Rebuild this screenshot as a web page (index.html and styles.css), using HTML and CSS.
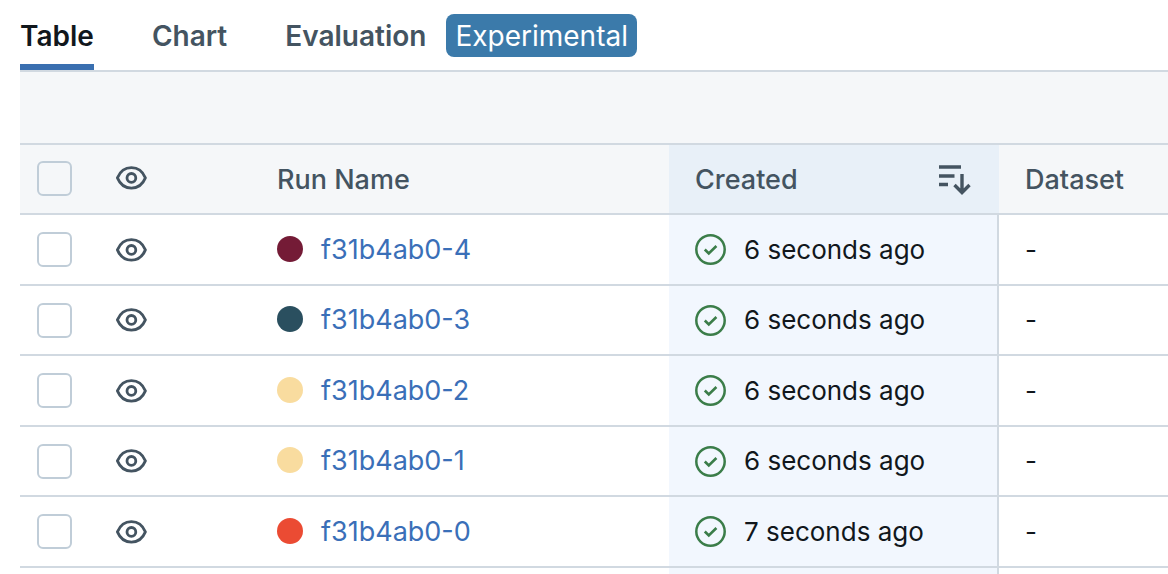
FILE: index.html
```html
<!DOCTYPE html>
<html lang="en">
<head>
<meta charset="utf-8">
<meta name="viewport" content="width=device-width, initial-scale=1">
<title>Runs</title>
<link rel="stylesheet" href="styles.css">
</head>
<body>
<svg class="sprite" aria-hidden="true">
  <symbol id="eye" viewBox="0 0 32 26">
    <path d="M2.400 12.900C4.900 6.900 9.900 2.700 16.400 2.700S27.900 6.900 30.400 12.900C27.900 18.900 22.900 23.100 16.400 23.100S4.900 18.900 2.400 12.900Z" fill="none" stroke="currentColor" stroke-width="2.800" stroke-linejoin="round"/>
    <circle cx="16.400" cy="12.900" r="4.400" fill="none" stroke="currentColor" stroke-width="2.800"/>
  </symbol>
  <symbol id="check" viewBox="0.5 0.5 31 31">
    <circle cx="16" cy="16" r="14.200" fill="none" stroke="currentColor" stroke-width="2.500"/>
    <path d="M10.300 16L14.300 20L21.900 12.500" fill="none" stroke="currentColor" stroke-width="2.600"/>
  </symbol>
  <symbol id="sort" viewBox="1 1 34 32">
    <path d="M1 4H23M1 13H16.500M1 21.500H10M24 11V29M16.500 22L24 29.500L31.500 22" fill="none" stroke="currentColor" stroke-width="3.400"/>
  </symbol>
</svg>
<main class="runs">
  <nav class="tabs" aria-label="Views">
    <button class="tab tab-active" type="button">Table</button>
    <button class="tab" type="button">Chart</button>
    <button class="tab" type="button">Evaluation <span class="tag">Experimental</span></button>
  </nav>
  <div class="group-header"></div>
  <table class="grid">
    <colgroup><col class="col-check"><col class="col-eye"><col class="col-name"><col class="col-created"><col></colgroup>
    <thead>
      <tr>
        <th><input class="box" type="checkbox" aria-label="Select all runs"></th>
        <th><button class="eye" type="button" aria-label="Toggle all runs"><svg><use href="#eye"/></svg></button></th>
        <th>Run Name</th>
        <th class="created"><div class="sorted">Created <svg class="sort"><use href="#sort"/></svg></div></th>
        <th>Dataset</th>
      </tr>
    </thead>
    <tbody>
      <tr>
        <td><input class="box" type="checkbox" aria-label="Select f31b4ab0-4"></td>
        <td><button class="eye" type="button" aria-label="Toggle f31b4ab0-4"><svg><use href="#eye"/></svg></button></td>
        <td><div class="name"><span class="dot maroon"></span><a href="#run-4">f31b4ab0-4</a></div></td>
        <td class="created"><div class="status"><svg class="check"><use href="#check"/></svg>6 seconds ago</div></td>
        <td>-</td>
      </tr>
      <tr>
        <td><input class="box" type="checkbox" aria-label="Select f31b4ab0-3"></td>
        <td><button class="eye" type="button" aria-label="Toggle f31b4ab0-3"><svg><use href="#eye"/></svg></button></td>
        <td><div class="name"><span class="dot teal"></span><a href="#run-3">f31b4ab0-3</a></div></td>
        <td class="created"><div class="status"><svg class="check"><use href="#check"/></svg>6 seconds ago</div></td>
        <td>-</td>
      </tr>
      <tr>
        <td><input class="box" type="checkbox" aria-label="Select f31b4ab0-2"></td>
        <td><button class="eye" type="button" aria-label="Toggle f31b4ab0-2"><svg><use href="#eye"/></svg></button></td>
        <td><div class="name"><span class="dot sand"></span><a href="#run-2">f31b4ab0-2</a></div></td>
        <td class="created"><div class="status"><svg class="check"><use href="#check"/></svg>6 seconds ago</div></td>
        <td>-</td>
      </tr>
      <tr>
        <td><input class="box" type="checkbox" aria-label="Select f31b4ab0-1"></td>
        <td><button class="eye" type="button" aria-label="Toggle f31b4ab0-1"><svg><use href="#eye"/></svg></button></td>
        <td><div class="name"><span class="dot sand"></span><a href="#run-1">f31b4ab0-1</a></div></td>
        <td class="created"><div class="status"><svg class="check"><use href="#check"/></svg>6 seconds ago</div></td>
        <td>-</td>
      </tr>
      <tr>
        <td><input class="box" type="checkbox" aria-label="Select f31b4ab0-0"></td>
        <td><button class="eye" type="button" aria-label="Toggle f31b4ab0-0"><svg><use href="#eye"/></svg></button></td>
        <td><div class="name"><span class="dot red"></span><a href="#run-0">f31b4ab0-0</a></div></td>
        <td class="created"><div class="status"><svg class="check"><use href="#check"/></svg>7 seconds ago</div></td>
        <td>-</td>
      </tr>
      <tr class="filler"><td></td><td></td><td></td><td class="created"></td><td></td></tr>
    </tbody>
  </table>
</main>
</body>
</html>
```
FILE: styles.css
```css
* { box-sizing: border-box; }

body {
  margin: 0;
  overflow: hidden;
  background: #fff;
  color: #11171c;
  font: 26px/32px Inter, "Liberation Sans", sans-serif;
}

button {
  padding: 0;
  border: 0;
  background: none;
  color: #445461;
  font: inherit;
}

.sprite { position: absolute; width: 0; height: 0; }

.runs { padding-left: 20px; }

.tabs {
  display: flex;
  gap: 58px;
  height: 72px;
  border-bottom: 2px solid #d1d9e1;
}

.tab {
  display: flex;
  align-items: center;
  gap: 20px;
  padding-top: 8px;
  border-bottom: 6px solid transparent;
  font-size: 28px;
  font-weight: 600;
}

.tab-active { border-color: #3a6fb0; color: #11171c; }

.tag {
  margin-bottom: 2px;
  padding: 6px 9px 5px;
  border-radius: 8px;
  background: #3b7aaa;
  color: #fff;
  font-weight: 400;
}

.group-header {
  height: 73px;
  border-bottom: 2px solid #d1d9e1;
  background: #f5f7f9;
}

.grid {
  width: 100%;
  border-collapse: separate;
  border-spacing: 0;
  table-layout: fixed;
}

.col-check { width: 78px; }
.col-eye { width: 162px; }
.col-name { width: 409px; }
.col-created { width: 330px; }

th, td {
  height: 70px;
  padding: 0 26px 0 17px;
  border-bottom: 2px solid #d1d9e1;
  text-align: left;
  vertical-align: middle;
}

tbody tr:nth-child(odd) td { height: 71px; }

th {
  padding-bottom: 2px;
  background: #f5f7f9;
  color: #445461;
  font-size: 27px;
  font-weight: 500;
}

th:nth-child(n + 3) { padding-top: 2px; padding-bottom: 0; }
th:nth-child(n + 4), td:nth-child(n + 4) { padding-left: 26px; }

th.created { background: #e8f0f8; }
td.created { border-right: 2px solid #d1d9e1; background: #f2f7fe; }

tbody .filler td { height: 24px; border-bottom: 0; }

.box {
  appearance: none;
  display: block;
  width: 35px;
  height: 35px;
  margin: 0;
  border: 2px solid #c0cdd8;
  border-radius: 6px;
  background: transparent;
}

.eye { display: block; }
.eye svg { display: block; width: 32px; height: 26px; }

.name, .status, .sorted { display: flex; align-items: center; }
.name { gap: 18px; font-size: 27px; }
.status { gap: 18px; }
.sorted { justify-content: space-between; }

.name a { color: #3a6fb8; text-decoration: none; }

.dot { width: 26px; height: 26px; margin-bottom: 2px; border-radius: 50%; }
.maroon { background: #741b36; }
.teal { background: #2a4f5f; }
.sand { background: #f9dc9f; }
.red { background: #eb4b33; }

.check { width: 31px; height: 31px; color: #3b7d49; }
.sort { width: 34px; height: 32px; }
```
